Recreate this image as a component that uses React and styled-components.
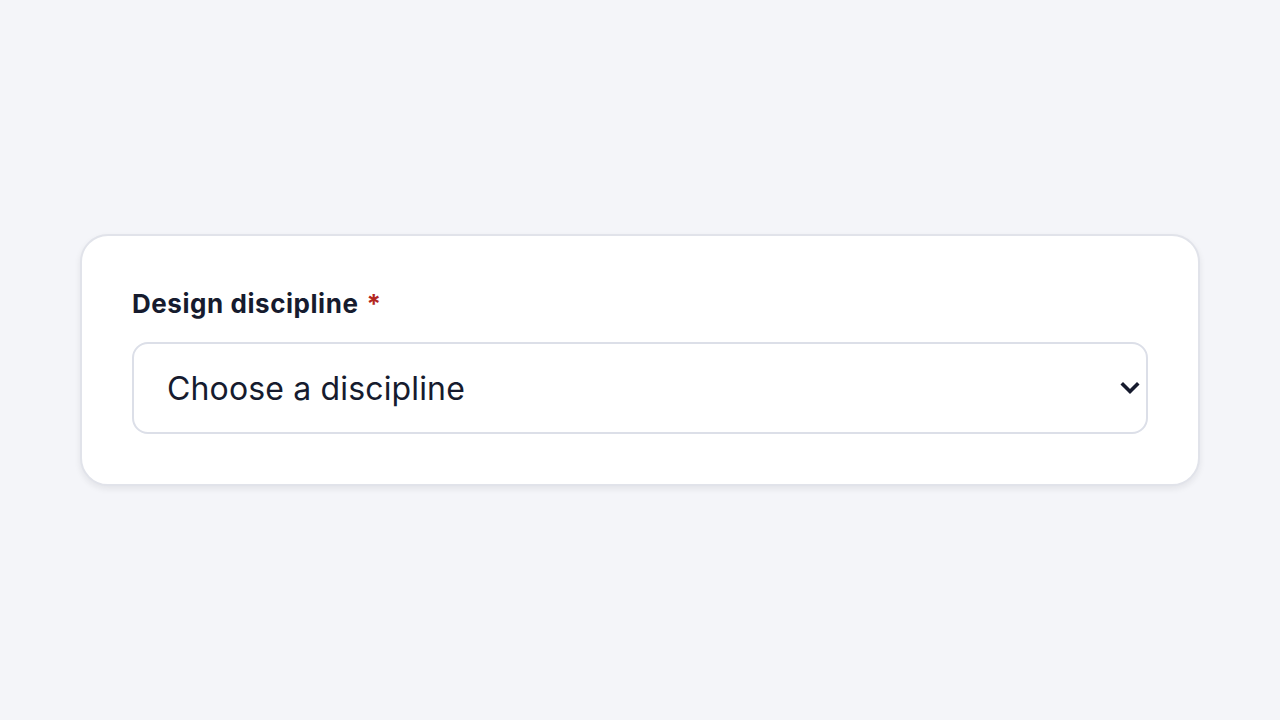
import React from 'react'
import styled, { createGlobalStyle } from 'styled-components'

const Global = createGlobalStyle`
  html, body { margin: 0; padding: 0; background: #f4f5f9; }
  body { font-family: Inter, "Noto Sans", sans-serif; color: #161b2e; }
`

const Page = styled.main`
  min-height: 100vh;
  display: flex;
  align-items: center;
  justify-content: center;
  padding: 0 80px;
  box-sizing: border-box;
`

const Card = styled.section`
  width: 100%;
  max-width: 1120px;
  box-sizing: border-box;
  background: #fff;
  border: 2px solid #e1e3ea;
  border-radius: 28px;
  padding: 50px 50px;
  box-shadow: 0 3px 6px rgba(20, 24, 40, 0.08);
  display: flex;
  flex-direction: column;
  gap: 20px;
`

const Label = styled.label`
  font-size: 26px;
  line-height: 36px;
  font-weight: 700;
  color: #161b2e;
  letter-spacing: 0.55px;
`

const Required = styled.span`
  color: #b3261e;
  margin-left: 8px;
`

const SelectWrap = styled.div`
  position: relative;
`

const Select = styled.select`
  appearance: none;
  -webkit-appearance: none;
  width: 100%;
  height: 92px;
  box-sizing: border-box;
  border: 2px solid #dcdfe8;
  border-radius: 16px;
  background: #fff;
  padding: 0 60px 0 33px;
  font-family: Inter, "Noto Sans", sans-serif;
  font-size: 32px;
  letter-spacing: 0.15px;
  color: #161b2e;
  outline: none;
`

const Chevron = styled.svg`
  position: absolute;
  right: 8px;
  top: 50%;
  transform: translateY(-50%);
  pointer-events: none;
`

export default function App() {
  return (
    <>
      <Global />
      <Page>
        <Card>
          <Label htmlFor="discipline">
            Design discipline<Required>*</Required>
          </Label>
          <SelectWrap>
            <Select id="discipline" defaultValue="">
              <option value="">Choose a discipline</option>
              <option value="ux">UX design</option>
              <option value="ui">UI design</option>
              <option value="product">Product design</option>
            </Select>
            <Chevron width="20" height="14" viewBox="0 0 20 14">
              <path d="M3 3.5l7 7 7-7" fill="none" stroke="#161b2e" strokeWidth="3.6" strokeLinecap="square" strokeLinejoin="miter" />
            </Chevron>
          </SelectWrap>
        </Card>
      </Page>
    </>
  )
}
